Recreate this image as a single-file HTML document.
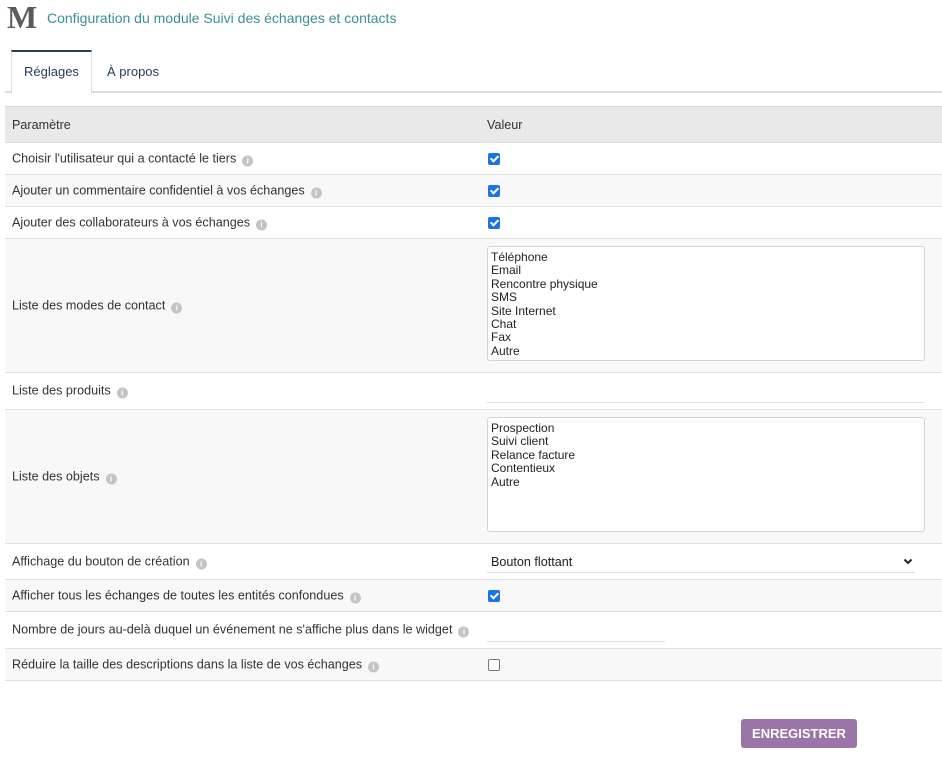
<!DOCTYPE html>
<html><head><meta charset="utf-8"><style>
*{box-sizing:border-box;margin:0;padding:0}
body{width:942px;height:768px;background:#fff;font-family:"Liberation Sans",Arial,sans-serif;font-size:12.6px;color:#333;position:relative;overflow:hidden}
.abs{position:absolute}
.row{position:absolute;left:5px;width:937px;border-bottom:1px solid #e0e0e0}
.g{background:#f8f8f8}
.lbl{position:absolute;left:7px;top:50%;transform:translateY(-50%);white-space:nowrap;line-height:14px}
.i{display:inline-block;width:11px;height:11px;border-radius:50%;background:#c4c4c4;vertical-align:-1px;margin-left:6px;color:#fff;font-size:8px;line-height:11px;text-align:center;font-weight:bold}
.cb{position:absolute;left:483px;top:50%;margin-top:-6px;width:12px;height:12px;border-radius:2px;background:#1a73e8}
.cb::after{content:"";position:absolute;left:4px;top:1px;width:3px;height:6px;border:solid #fff;border-width:0 2px 2px 0;transform:rotate(45deg)}
.cb.off{background:#fff;border:1px solid #777}
.cb.off::after{display:none}
.ta{position:absolute;left:482px;width:438px;border:1px solid #d4d4d4;border-radius:3px;background:#fff;padding:4px 3px;line-height:13.4px;font-size:12px;color:#222}
</style></head><body>
<div class="abs" style="left:7px;top:1px;font-family:'Liberation Serif',serif;font-weight:bold;font-size:32px;color:#5a5a5a;line-height:32px">M</div>
<div class="abs" style="left:47px;top:10px;font-size:14px;color:#3a8f98">Configuration du module Suivi des échanges et contacts</div>
<div class="abs" style="left:5px;top:91px;width:937px;height:2px;background:#ddd"></div>
<div class="abs" style="left:11px;top:50px;width:81px;height:43px;border:1px solid #ddd;border-top:2px solid #2c3e50;border-bottom:none;background:#fff"></div>
<div class="abs" style="left:24px;top:64px;font-size:13px;color:#263c5c">Réglages</div>
<div class="abs" style="left:107px;top:64px;font-size:13px;color:#263c5c">À propos</div>

<div class="row" style="top:106px;height:37px;background:#e9e9e9;border-top:1px solid #d6d6d6"><span class="lbl">Paramètre</span><span class="lbl" style="left:482px">Valeur</span></div>
<div class="row" style="top:143px;height:32px"><span class="lbl">Choisir l'utilisateur qui a contacté le tiers<span class="i">i</span></span><span class="cb"></span></div>
<div class="row g" style="top:175px;height:32px"><span class="lbl">Ajouter un commentaire confidentiel à vos échanges<span class="i">i</span></span><span class="cb"></span></div>
<div class="row" style="top:207px;height:32px"><span class="lbl">Ajouter des collaborateurs à vos échanges<span class="i">i</span></span><span class="cb"></span></div>
<div class="row g" style="top:239px;height:134px"><span class="lbl">Liste des modes de contact<span class="i">i</span></span>
<div class="ta" style="top:7px;height:115px">Téléphone<br>Email<br>Rencontre physique<br>SMS<br>Site Internet<br>Chat<br>Fax<br>Autre</div></div>
<div class="row" style="top:373px;height:37px"><span class="lbl">Liste des produits<span class="i">i</span></span>
<div class="abs" style="left:482px;top:29px;width:437px;height:1px;background:#ddd"></div></div>
<div class="row g" style="top:410px;height:134px"><span class="lbl">Liste des objets<span class="i">i</span></span>
<div class="ta" style="top:7px;height:115px">Prospection<br>Suivi client<br>Relance facture<br>Contentieux<br>Autre</div></div>
<div class="row" style="top:544px;height:36px"><span class="lbl">Affichage du bouton de création<span class="i">i</span></span>
<span class="lbl" style="left:486px;font-size:12.6px;color:#222">Bouton flottant</span>
<svg class="abs" style="left:898px;top:14px" width="10" height="7" viewBox="0 0 10 7"><path d="M1.5 1.5 L5 5 L8.5 1.5" stroke="#222" stroke-width="2" fill="none"/></svg>
<div class="abs" style="left:482px;top:28px;width:428px;height:1px;background:#ddd"></div></div>
<div class="row g" style="top:580px;height:32px"><span class="lbl">Afficher tous les échanges de toutes les entités confondues<span class="i">i</span></span><span class="cb"></span></div>
<div class="row" style="top:612px;height:37px"><span class="lbl">Nombre de jours au-delà duquel un événement ne s'affiche plus dans le widget<span class="i">i</span></span>
<div class="abs" style="left:482px;top:29px;width:178px;height:1px;background:#ddd"></div></div>
<div class="row g" style="top:649px;height:32px"><span class="lbl">Réduire la taille des descriptions dans la liste de vos échanges<span class="i">i</span></span><span class="cb off"></span></div>

<div class="abs" style="left:741px;top:719px;width:116px;height:29px;background:#9c75a8;border-radius:3px;color:#fff;font-weight:bold;font-size:13px;text-align:center;line-height:29px">ENREGISTRER</div>
</body></html>
